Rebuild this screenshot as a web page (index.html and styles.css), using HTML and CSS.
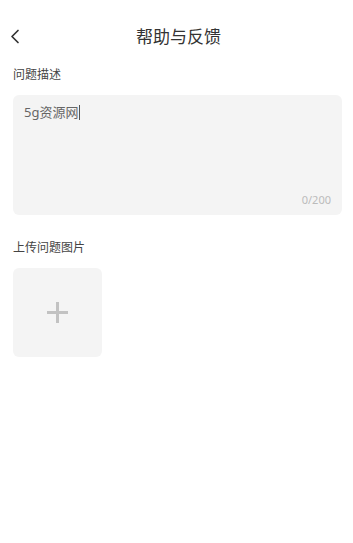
FILE: index.html
```html
<!DOCTYPE html>
<html lang="zh-CN">
<head>
  <meta charset="UTF-8" />
  <meta name="viewport" content="width=device-width, initial-scale=1" />
  <title>帮助与反馈</title>
  <link rel="stylesheet" href="styles.css">
</head>
<body>

  <!-- 顶部栏 -->
  <div class="header">
    <span class="back">
      <svg width="10" height="15" viewBox="0 0 10 15">
        <path d="M8 1.5 L2 7.5 L8 13.5" fill="none" stroke="#333" stroke-width="1.7" stroke-linecap="round" stroke-linejoin="round"/>
      </svg>
    </span>
    <h1>帮助与反馈</h1>
  </div>

  <div class="content">
    <div class="label">问题描述</div>
    <div class="textbox">
      <div class="text">5g资源网<span class="caret"></span></div>
      <div class="count">0/200</div>
    </div>

    <div class="label label-upload">上传问题图片</div>
    <div class="upload">
      <span class="plus"></span>
    </div>
  </div>

</body>
</html>
```

FILE: styles.css
```css
* {
  margin: 0;
  padding: 0;
  box-sizing: border-box;
}
body {
  font-family: "Noto Sans", "Noto Sans CJK SC", sans-serif;
  background: #fff;
  color: #333;
  width: 353px;
}

/* 顶部栏 */
.header {
  position: relative;
  height: 40px;
  margin-top: 15px;
  display: flex;
  align-items: center;
  justify-content: center;
}
.header h1 {
  font-size: 17px;
  font-weight: 400;
  color: #333;
  margin-left: 4px;
}
.back {
  position: absolute;
  left: 10px;
  top: 14px;
  display: flex;
}

.content {
  padding: 0 11px 0 13px;
}
.label {
  font-size: 12px;
  line-height: 17px;
  color: #444;
  margin-top: 11px;
}
.label-upload {
  margin-top: 24px;
}

/* 问题描述 */
.textbox {
  margin-top: 12px;
  height: 120px;
  background: #f4f4f4;
  border-radius: 6px;
  padding: 8px 11px;
  display: flex;
  flex-direction: column;
  justify-content: space-between;
}
.text {
  font-size: 13px;
  line-height: 18px;
  color: #666;
  display: flex;
  align-items: center;
}
.caret {
  display: inline-block;
  width: 1px;
  height: 15px;
  background: #555;
  margin-left: 1px;
}
.count {
  text-align: right;
  font-size: 11px;
  color: #bbb;
}

/* 上传图片 */
.upload {
  margin-top: 12px;
  width: 89px;
  height: 89px;
  background: #f4f4f4;
  border-radius: 6px;
  display: flex;
  align-items: center;
  justify-content: center;
}
.plus {
  position: relative;
  width: 21px;
  height: 21px;
}
.plus::before,
.plus::after {
  content: "";
  position: absolute;
  background: #c2c2c2;
}
.plus::before {
  left: 0;
  top: 9px;
  width: 21px;
  height: 3px;
}
.plus::after {
  left: 9px;
  top: 0;
  width: 3px;
  height: 21px;
}
```
